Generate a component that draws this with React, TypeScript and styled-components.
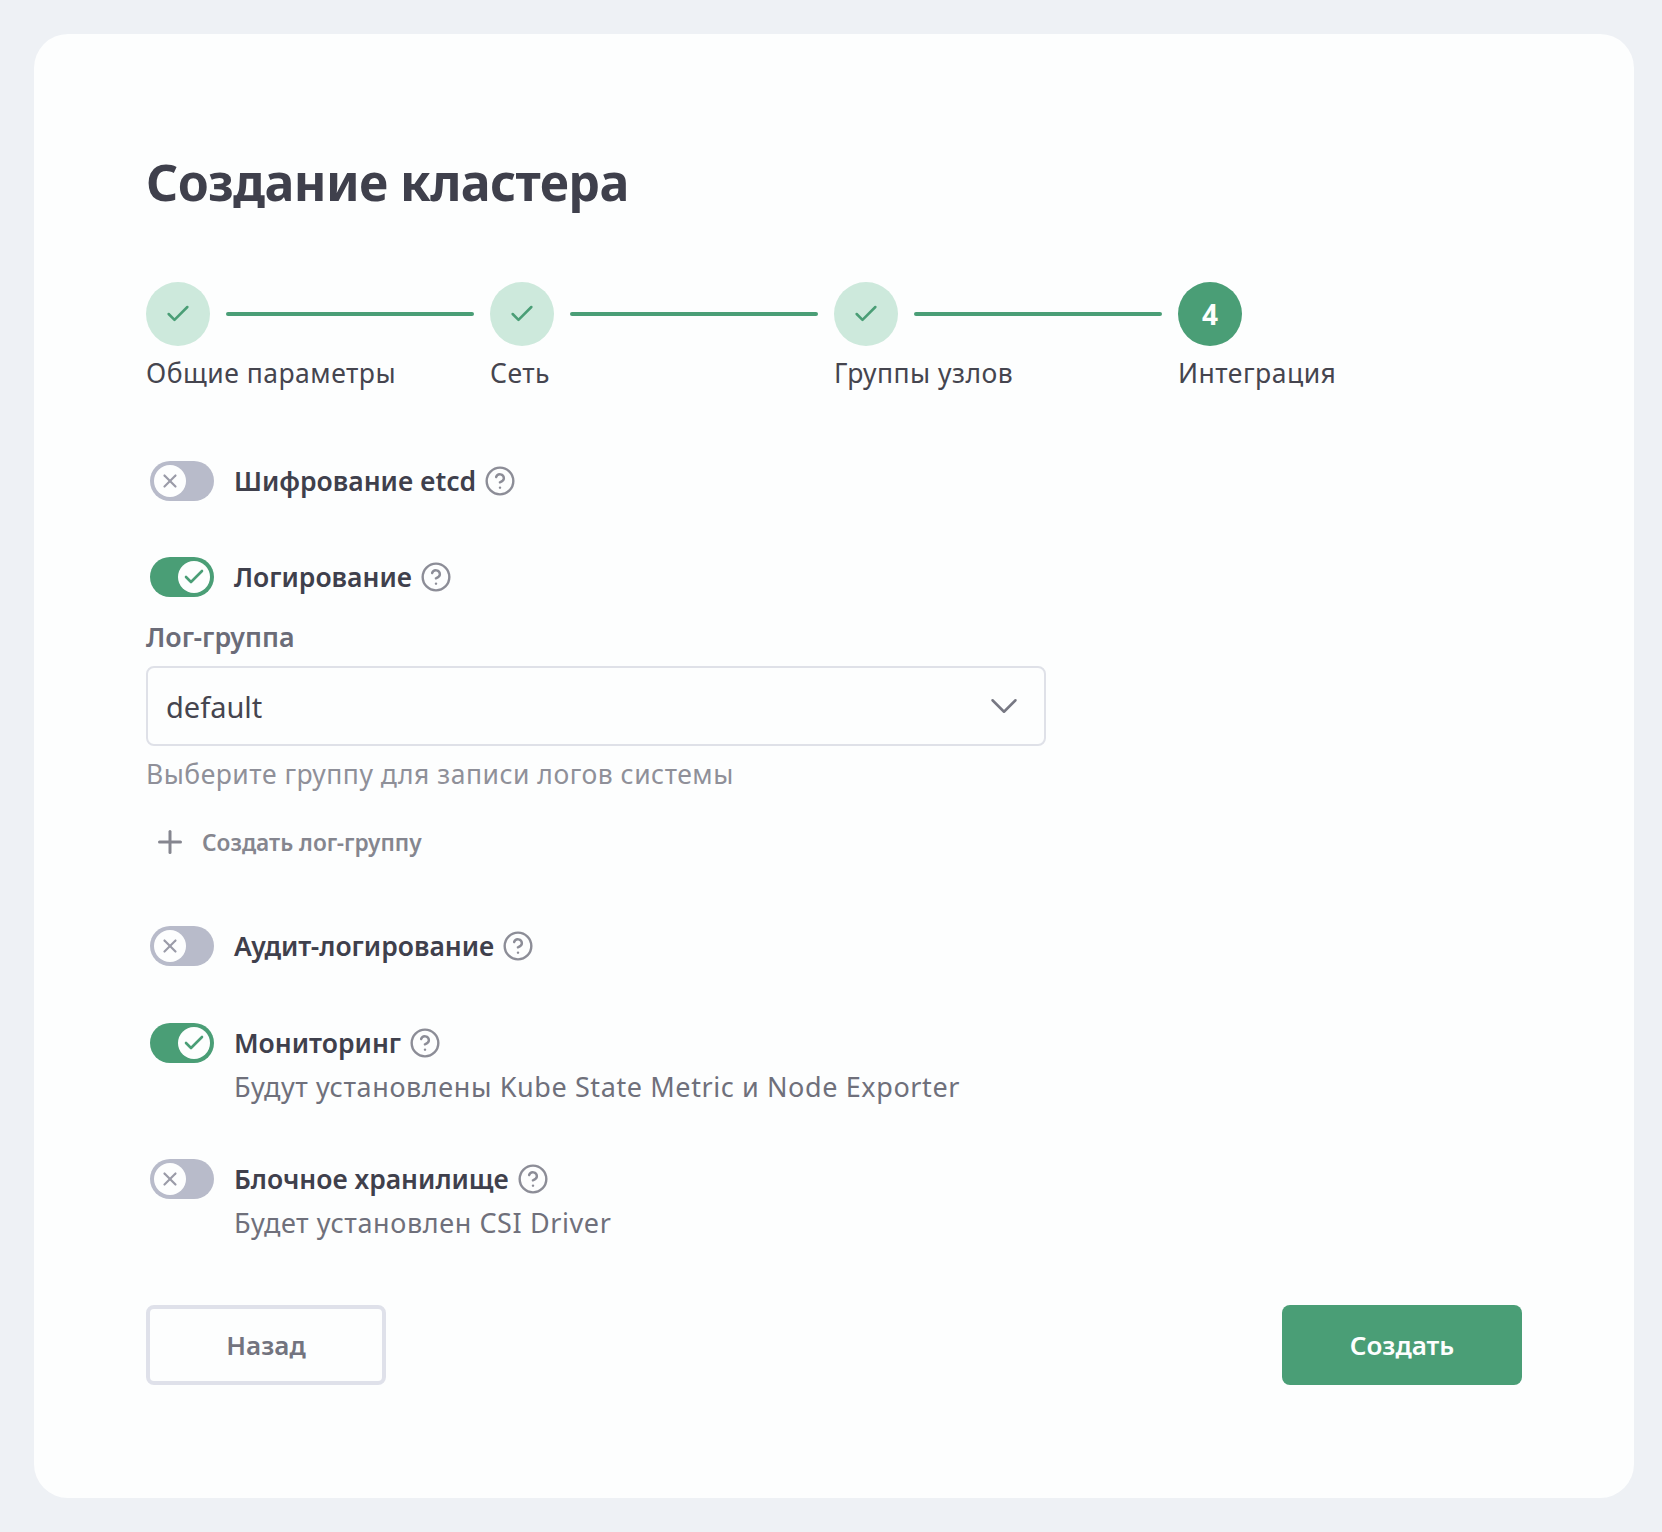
import React from "react";
import styled, { createGlobalStyle } from "styled-components";
import { Check, X, Plus, ChevronDown, CircleHelp } from "lucide-react";

const Global = createGlobalStyle`
  html, body { margin: 0; padding: 0; background: #eef1f5; }
  * { box-sizing: border-box; }
  body { font-family: "Noto Sans", "Open Sans", sans-serif; color: #3f3f4b; }
`;

const Page = styled.div`
  width: 1662px;
  height: 1532px;
  padding: 34px 28px 34px 34px;
`;

const Card = styled.main`
  width: 1600px;
  height: 1464px;
  padding: 112px 112px 0;
  background: #fdfefe;
  border-radius: 34px;
  display: flex;
  flex-direction: column;
`;

const Title = styled.h1`
  margin: 0 0 64px;
  font-size: 50px;
  line-height: 72px;
  font-weight: 700;
  letter-spacing: -0.6px;
  color: #3f404c;
`;

const Stepper = styled.ol`
  display: flex;
  list-style: none;
  margin: 0 0 68px;
  padding: 0;
`;

const Step = styled.li`
  width: 344px;
`;

const StepTrack = styled.div`
  display: flex;
  align-items: center;
  gap: 16px;
  padding-right: 16px;
`;

const Circle = styled.div<{ $active?: boolean }>`
  flex: none;
  width: 64px;
  height: 64px;
  border-radius: 50%;
  display: flex;
  align-items: center;
  justify-content: center;
  background: ${(p) => (p.$active ? "#4a9e76" : "#cde9dc")};
  color: ${(p) => (p.$active ? "#fdfefe" : "#4a9e76")};
  font-size: 28px;
  font-weight: 700;
`;

const Line = styled.div`
  flex: 1;
  height: 4px;
  border-radius: 2px;
  background: #4a9e76;
`;

const StepLabel = styled.div`
  margin-top: 7px;
  font-size: 26.5px;
  line-height: 40px;
  color: #45454f;
  letter-spacing: 0.5px;
  white-space: nowrap;
`;

const Row = styled.div<{ $gap?: number }>`
  display: flex;
  align-items: flex-start;
  gap: 20px;
  padding-left: 4px;
  margin-bottom: ${(p) => p.$gap ?? 0}px;
`;

const Switch = styled.div<{ $on?: boolean }>`
  flex: none;
  width: 64px;
  height: 40px;
  border-radius: 20px;
  padding: 4px;
  display: flex;
  justify-content: ${(p) => (p.$on ? "flex-end" : "flex-start")};
  background: ${(p) => (p.$on ? "#4a9e76" : "#b8bbca")};
`;

const Knob = styled.div<{ $on?: boolean }>`
  width: 32px;
  height: 32px;
  border-radius: 50%;
  background: #fdfefe;
  display: flex;
  align-items: center;
  justify-content: center;
  color: ${(p) => (p.$on ? "#4a9e76" : "#9a9ba8")};
`;

const RowBody = styled.div`
  display: flex;
  flex-direction: column;
`;

const RowTitle = styled.div`
  display: flex;
  align-items: center;
  gap: 8px;
  height: 40px;
  font-size: 26.5px;
  line-height: 40px;
  font-weight: 600;
  color: #3f404c;
  svg { color: #8c8d97; }
`;

const RowHint = styled.div`
  margin-top: 4px;
  font-size: 27px;
  line-height: 40px;
  color: #6f707b;
  letter-spacing: 0.6px;
`;

const FieldLabel = styled.div`
  margin-top: 22px;
  font-size: 26.8px;
  line-height: 36px;
  font-weight: 600;
  color: #6b6c78;
`;

const Select = styled.div`
  margin-top: 11px;
  width: 900px;
  height: 80px;
  border: 2px solid #dfe1e8;
  border-radius: 8px;
  padding: 0 17px 0 18px;
  display: flex;
  align-items: center;
  justify-content: space-between;
  font-size: 29px;
  color: #45454f;
  svg { color: #777883; }
`;

const FieldHint = styled.div`
  margin-top: 8px;
  font-size: 26.5px;
  line-height: 40px;
  color: #8f9099;
  letter-spacing: 0.5px;
`;

const AddLink = styled.div`
  display: flex;
  align-items: center;
  gap: 14px;
  margin: 28px 0 64px;
  padding-left: 6px;
  height: 40px;
  font-size: 22.7px;
  font-weight: 600;
  color: #85868f;
`;

const Footer = styled.div`
  margin-top: auto;
  margin-bottom: 113px;
  display: flex;
  justify-content: space-between;
`;

const BackButton = styled.button`
  width: 240px;
  height: 80px;
  background: #fdfefe;
  border: 4px solid #dfe1ea;
  border-radius: 8px;
  font: 600 26px "Noto Sans", sans-serif;
  color: #73747f;
`;

const CreateButton = styled.button`
  width: 240px;
  height: 80px;
  background: #4a9e76;
  border: none;
  border-radius: 8px;
  font: 600 26px "Noto Sans", sans-serif;
  color: #fdfefe;
`;

const steps = ["Общие параметры", "Сеть", "Группы узлов", "Интеграция"];

const Toggle = ({ on }: { on?: boolean }) => (
  <Switch $on={on}>
    <Knob $on={on}>{on ? <Check size={24} strokeWidth={2.6} /> : <X size={22} strokeWidth={2.4} />}</Knob>
  </Switch>
);

const Heading = ({ children }: { children: React.ReactNode }) => (
  <RowTitle>
    {children}
    <CircleHelp size={32} strokeWidth={1.8} />
  </RowTitle>
);

export default function App() {
  return (
    <>
      <Global />
      <Page>
        <Card>
          <Title>Создание кластера</Title>
          <Stepper>
            {steps.map((s, i) => (
              <Step key={s}>
                <StepTrack>
                  <Circle $active={i === 3}>{i === 3 ? "4" : <Check size={28} strokeWidth={2.2} />}</Circle>
                  {i < 3 && <Line />}
                </StepTrack>
                <StepLabel>{s}</StepLabel>
              </Step>
            ))}
          </Stepper>
          <Row $gap={56}>
            <Toggle />
            <RowBody><Heading>Шифрование etcd</Heading></RowBody>
          </Row>
          <Row>
            <Toggle on />
            <RowBody><Heading>Логирование</Heading></RowBody>
          </Row>
          <FieldLabel>Лог-группа</FieldLabel>
          <Select>
            default
            <ChevronDown size={46} strokeWidth={1.3} />
          </Select>
          <FieldHint>Выберите группу для записи логов системы</FieldHint>
          <AddLink>
            <Plus size={36} strokeWidth={2} />
            Создать лог-группу
          </AddLink>
          <Row $gap={57}>
            <Toggle />
            <RowBody><Heading>Аудит-логирование</Heading></RowBody>
          </Row>
          <Row $gap={52}>
            <Toggle on />
            <RowBody>
              <Heading>Мониторинг</Heading>
              <RowHint>Будут установлены Kube State Metric и Node Exporter</RowHint>
            </RowBody>
          </Row>
          <Row>
            <Toggle />
            <RowBody>
              <Heading>Блочное хранилище</Heading>
              <RowHint>Будет установлен CSI Driver</RowHint>
            </RowBody>
          </Row>
          <Footer>
            <BackButton>Назад</BackButton>
            <CreateButton>Создать</CreateButton>
          </Footer>
        </Card>
      </Page>
    </>
  );
}
